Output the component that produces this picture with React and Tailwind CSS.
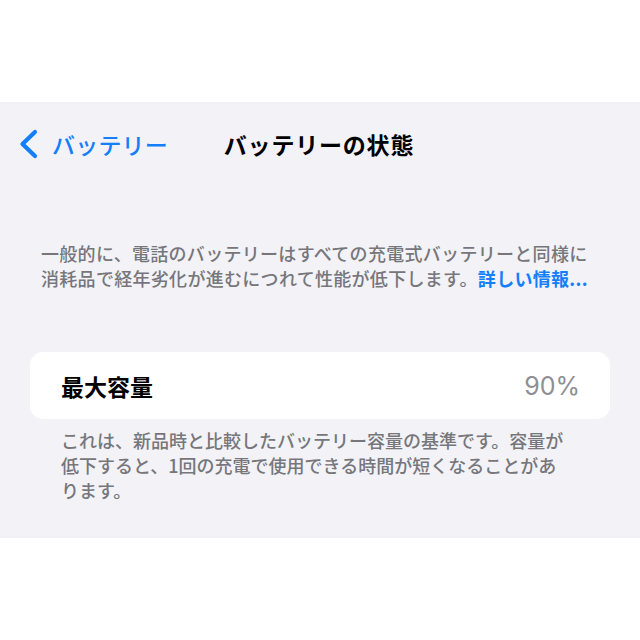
export default function App() {
  const jp = { fontFamily: '"Noto Sans CJK JP", "Noto Sans", sans-serif' };
  return (
    <div className="w-[640px] h-[640px] bg-white flex flex-col" style={jp}>
      <div className="h-[102px] shrink-0 bg-white" />
      <div className="bg-[#f2f2f7] flex flex-col pb-[35px]">
        <div className="relative h-[84px] flex items-center">
          <div className="flex items-center pl-[19px]">
            <svg width="20" height="30" viewBox="0 0 20 30" className="shrink-0">
              <path d="M16 3 L3.5 15 L16 27" fill="none" stroke="#147efb" strokeWidth="4.2" strokeLinecap="round" strokeLinejoin="round" />
            </svg>
            <span className="ml-[13px] text-[23px] leading-[30px] text-[#147efb] font-medium tracking-[0.2px]">バッテリー</span>
          </div>
          <div className="absolute left-0 right-0 top-0 h-full flex items-center justify-center pointer-events-none">
            <span className="text-[23px] leading-[30px] font-bold text-black tracking-[0.8px] pr-[2px]">バッテリーの状態</span>
          </div>
        </div>
        <p className="mt-[55px] pl-[41px] text-[18px] leading-[25px] text-[#76767b] font-medium whitespace-nowrap tracking-[0.3px]">
          一般的に、電話のバッテリーはすべての充電式バッテリーと同様に
          <br />
          消耗品で経年劣化が進むにつれて性能が低下します。<span className="text-[#147efb] font-semibold">詳しい情報...</span>
        </p>
        <div className="mt-[61px] mx-[30px] h-[67px] bg-white rounded-[13px] flex items-center justify-between pl-[31px] pr-[30px]">
          <span className="text-[23px] leading-[30px] font-bold text-black">最大容量</span>
          <span className="text-[25px] leading-[30px] text-[#8e8e93]" style={{ fontFamily: '"Inter", "Noto Sans", sans-serif' }}>90%</span>
        </div>
        <p className="mt-[9px] pl-[61px] text-[18px] leading-[25px] text-[#76767b] font-medium whitespace-nowrap">
          これは、新品時と比較したバッテリー容量の基準です。容量が
          <br />
          低下すると、1回の充電で使用できる時間が短くなることがあ
          <br />
          ります。
        </p>
      </div>
      <div className="flex-1 bg-white" />
    </div>
  );
}
